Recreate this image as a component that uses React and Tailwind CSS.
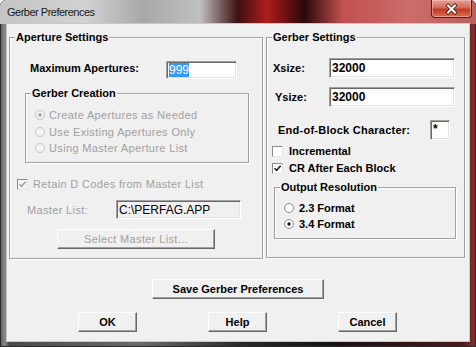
import React from 'react';

const gray = 'text-[#a0a0a0]';

function Group({ title, className, children }) {
    return (
        <div className={`relative border border-[#a0a0a0] shadow-[inset_1px_1px_0_#fff,1px_1px_0_#fff] ${className}`}>
            <span className="absolute -top-[8px] left-[5px] bg-[#f0f0f0] px-[1px] text-[11px] font-bold leading-[14px] text-black">
                {title}
            </span>
            {children}
        </div>
    );
}

function Radio({ checked, disabled }) {
    return (
        <svg width="10" height="10" viewBox="0 0 10 10" className="shrink-0">
            <circle cx="5" cy="5" r="4.5" fill={disabled ? '#f4f4f4' : '#fff'} stroke={disabled ? '#c4c4c4' : '#8a8a8a'} />
            {checked && <circle cx="5" cy="5" r="1.7" fill={disabled ? '#a0a0a0' : '#1a1a1a'} />}
        </svg>
    );
}

function Check({ checked, disabled }) {
    return (
        <div className={`w-[11px] h-[11px] shrink-0 border border-t-[#8a8a8a] border-l-[#8a8a8a] border-b-[#e6e6e6] border-r-[#e6e6e6] ${disabled ? 'bg-[#f4f4f4]' : 'bg-white'}`}>
            {checked && (
                <svg width="9" height="9" viewBox="0 0 9 9">
                    <path d="M1.5 4.2 L3.6 6.4 L7.6 1.8" fill="none" stroke={disabled ? '#a0a0a0' : '#1a1a1a'} strokeWidth="1.6" />
                </svg>
            )}
        </div>
    );
}

function Field({ className, children }) {
    return (
        <div className={`flex items-center pl-[2px] border border-t-[#a0a0a0] border-l-[#a0a0a0] border-b-white border-r-white shadow-[inset_1px_1px_0_#696969,inset_-1px_-1px_0_#e3e3e3] text-[12px] leading-[14px] text-black ${className}`}>
            {children}
        </div>
    );
}

function Button({ children, className, disabled }) {
    return (
        <div className={`flex items-center justify-center border border-t-white border-l-white border-b-[#696969] border-r-[#696969] shadow-[inset_-1px_-1px_0_#a0a0a0] bg-[#f0f0f0] text-[11px] leading-[14px] ${disabled ? 'text-[#a0a0a0] font-normal tracking-[0.35px]' : 'text-black font-bold'} ${className}`}>
            {children}
        </div>
    );
}

export default function App() {
    return (
        <div className="w-[476px] h-[347px] rounded-t-[6px] overflow-hidden shadow-[inset_0_0_0_1px_#2a2a2a] bg-[linear-gradient(to_right,#5a5a5a_0%,#8a8a8a_1%,#4a4a4a_2%,#6a6a6a_30%,#2a2a2a_50%,#1a1010_70%,#4a1a1a_97%,#8a3030_100%)] font-['Liberation_Sans',Arial,sans-serif]">
            <div className="h-[24px] flex items-start bg-[linear-gradient(to_right,#c4c4c4_0%,#d2d2d2_18%,#a8a8a8_30%,#c0c0c0_42%,#3c1010_50%,#b01c1c_56%,#2a0808_64%,#c25050_72%,#cc6c6c_86%,#b86060_100%)]">
                <span className="mt-[5px] pl-[7px] text-[11px] leading-[14px] tracking-[-0.5px] text-[#1a1a1a]">Gerber Preferences</span>
                <div className="ml-auto mr-[4px] w-[41px] h-[18px] rounded-b-[4px] border border-t-0 border-[#5a1a1a] shadow-[inset_0_0_0_1px_rgba(255,200,190,0.5)] bg-[linear-gradient(to_bottom,#e6a298_0%,#d26a5a_45%,#c23a22_55%,#d8704c_100%)] flex items-center justify-center">
                    <svg width="13" height="12" viewBox="0 0 13 12">
                        <path d="M3 2.5 L10 9.5 M10 2.5 L3 9.5" stroke="#4a1010" strokeWidth="3.6" strokeLinecap="square" />
                        <path d="M3 2.5 L10 9.5 M10 2.5 L3 9.5" stroke="#fff" strokeWidth="2" strokeLinecap="square" />
                    </svg>
                </div>
            </div>

            <div className="ml-[7px] w-[462px] h-[317px] bg-[#f0f0f0] shadow-[0_0_0_1px_#c8c8c8] flex flex-col">
                <div className="flex gap-[3px] pl-[2px] pt-[13px]">
                    <Group title="Aperture Settings" className="w-[254px] h-[222px]">
                        <div className="mt-[23px] pl-[20px] flex items-start">
                            <span className="w-[136px] text-[11px] font-bold leading-[14px] text-black">Maximum Apertures:</span>
                            <Field className="w-[71px] h-[18px] bg-white">
                                <span className="bg-[#3399ff] text-white">999</span>
                            </Field>
                        </div>

                        <Group title="Gerber Creation" className="mt-[14px] ml-[15px] w-[224px] h-[70px]">
                            <div className={`pt-[13px] pl-[9px] text-[11px] leading-[14px] tracking-[0.35px] ${gray}`}>
                                <div className="h-[16px] flex items-center gap-[4px]"><Radio checked disabled /><span>Create Apertures as Needed</span></div>
                                <div className="h-[17px] flex items-center gap-[4px]"><Radio disabled /><span>Use Existing Apertures Only</span></div>
                                <div className="h-[16px] flex items-center gap-[4px]"><Radio disabled /><span>Using Master Aperture List</span></div>
                            </div>
                        </Group>

                        <div className={`mt-[14px] pl-[7px] h-[14px] flex items-center gap-[5px] text-[11px] leading-[14px] tracking-[0.35px] ${gray}`}>
                            <Check checked disabled />
                            <span>Retain D Codes from Master List</span>
                        </div>

                        <div className="mt-[9px] pl-[17px] flex items-center">
                            <span className={`w-[89px] text-[11px] leading-[14px] tracking-[0.35px] ${gray}`}>Master List:</span>
                            <Field className="w-[125px] h-[19px] bg-[#f0f0f0] text-[11px]">C:\PERFAG.APP</Field>
                        </div>

                        <Button disabled className="mt-[10px] ml-[47px] w-[158px] h-[20px]">Select Master List...</Button>
                    </Group>

                    <Group title="Gerber Settings" className="w-[199px] h-[221px]">
                        <div className="text-[11px] font-bold leading-[14px] text-black">
                            <div className="mt-[20px] pl-[6px] flex items-center">
                                <span className="w-[56px]">Xsize:</span>
                                <Field className="w-[126px] h-[20px] bg-white">32000</Field>
                            </div>
                            <div className="mt-[9px] pl-[8px] flex items-center">
                                <span className="w-[54px]">Ysize:</span>
                                <Field className="w-[126px] h-[20px] bg-white">32000</Field>
                            </div>
                            <div className="mt-[13px] pl-[11px] flex items-center">
                                <span className="w-[152px] tracking-[0.25px]">End-of-Block Character:</span>
                                <Field className="w-[20px] h-[20px] bg-white items-start pt-[1px]">*</Field>
                            </div>
                            <div className="mt-[4px] pl-[5px] h-[14px] flex items-center gap-[6px]">
                                <Check />
                                <span>Incremental</span>
                            </div>
                            <div className="mt-[3px] pl-[5px] h-[14px] flex items-center gap-[6px]">
                                <Check checked />
                                <span>CR After Each Block</span>
                            </div>
                            <Group title="Output Resolution" className="mt-[12px] ml-[7px] w-[182px] h-[52px]">
                                <div className="pt-[12px] pl-[9px]">
                                    <div className="h-[16px] flex items-center gap-[5px]"><Radio /><span>2.3 Format</span></div>
                                    <div className="h-[16px] flex items-center gap-[5px]"><Radio checked /><span>3.4 Format</span></div>
                                </div>
                            </Group>
                        </div>
                    </Group>
                </div>

                <Button className="mt-[20px] ml-[145px] w-[172px] h-[20px]">Save Gerber Preferences</Button>

                <div className="mt-[13px] pl-[71px] flex gap-[71px]">
                    <Button className="w-[59px] h-[20px]">OK</Button>
                    <Button className="w-[59px] h-[20px]">Help</Button>
                    <Button className="w-[59px] h-[20px]">Cancel</Button>
                </div>
            </div>
        </div>
    );
}
